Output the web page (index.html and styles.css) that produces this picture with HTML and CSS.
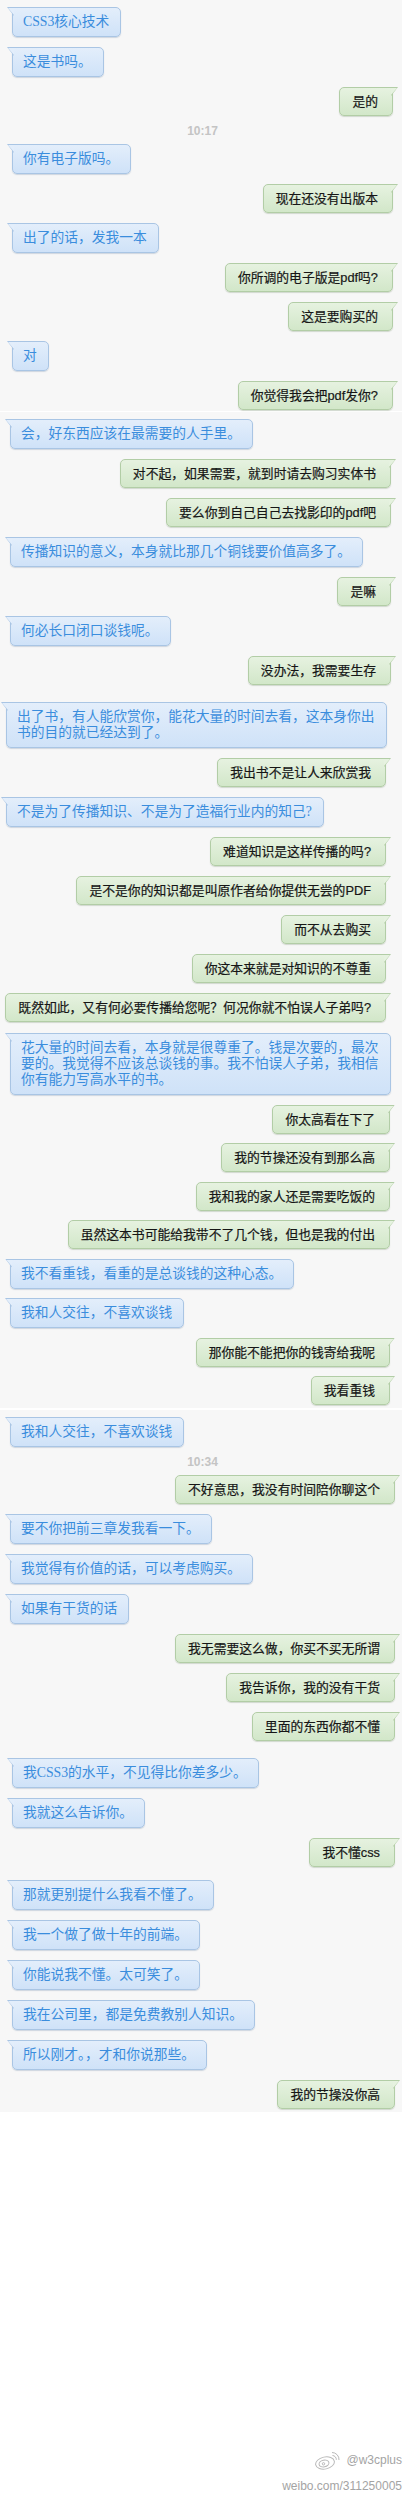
FILE: index.html
```html
<!DOCTYPE html>
<html lang="zh-CN">
<head>
<meta charset="utf-8">
<title>聊天记录</title>
<link rel="stylesheet" href="styles.css">
</head>
<body>
<div class="panel">
  <section class="seg seg-1">
    <div class="row left"><div class="bubble blue">CSS3核心技术</div></div>
    <div class="row left"><div class="bubble blue">这是书吗。</div></div>
    <div class="row right"><div class="bubble green">是的</div></div>
    <div class="stamp">10:17</div>
    <div class="row left"><div class="bubble blue">你有电子版吗。</div></div>
    <div class="row right"><div class="bubble green">现在还没有出版本</div></div>
    <div class="row left"><div class="bubble blue">出了的话，发我一本</div></div>
    <div class="row right"><div class="bubble green">你所调的电子版是pdf吗?</div></div>
    <div class="row right"><div class="bubble green">这是要购买的</div></div>
    <div class="row left"><div class="bubble blue">对</div></div>
    <div class="row right"><div class="bubble green">你觉得我会把pdf发你?</div></div>
  </section>
  <section class="seg seg-2">
    <div class="row left"><div class="bubble blue">会，好东西应该在最需要的人手里。</div></div>
    <div class="row right"><div class="bubble green">对不起，如果需要，就到时请去购习实体书</div></div>
    <div class="row right"><div class="bubble green">要么你到自己自己去找影印的pdf吧</div></div>
    <div class="row left"><div class="bubble blue">传播知识的意义，本身就比那几个铜钱要价值高多了。</div></div>
    <div class="row right"><div class="bubble green">是嘛</div></div>
    <div class="row left"><div class="bubble blue">何必长口闭口谈钱呢。</div></div>
    <div class="row right"><div class="bubble green">没办法，我需要生存</div></div>
  </section>
  <section class="seg seg-3">
    <div class="row left"><div class="bubble blue">出了书，有人能欣赏你，能花大量的时间去看，这本身你出<br>书的目的就已经达到了。</div></div>
    <div class="row right"><div class="bubble green">我出书不是让人来欣赏我</div></div>
    <div class="row left"><div class="bubble blue">不是为了传播知识、不是为了造福行业内的知己?</div></div>
    <div class="row right"><div class="bubble green">难道知识是这样传播的吗?</div></div>
    <div class="row right"><div class="bubble green">是不是你的知识都是叫原作者给你提供无尝的PDF</div></div>
    <div class="row right"><div class="bubble green">而不从去购买</div></div>
    <div class="row right"><div class="bubble green">你这本来就是对知识的不尊重</div></div>
    <div class="row right"><div class="bubble green">既然如此，又有何必要传播给您呢？何况你就不怕误人子弟吗?</div></div>
  </section>
  <section class="seg seg-4">
    <div class="row left"><div class="bubble blue">花大量的时间去看，本身就是很尊重了。钱是次要的，最次<br>要的。我觉得不应该总谈钱的事。我不怕误人子弟，我相信<br>你有能力写高水平的书。</div></div>
    <div class="row right"><div class="bubble green">你太高看在下了</div></div>
    <div class="row right"><div class="bubble green">我的节操还没有到那么高</div></div>
    <div class="row right"><div class="bubble green">我和我的家人还是需要吃饭的</div></div>
    <div class="row right"><div class="bubble green">虽然这本书可能给我带不了几个钱，但也是我的付出</div></div>
    <div class="row left"><div class="bubble blue">我不看重钱，看重的是总谈钱的这种心态。</div></div>
    <div class="row left"><div class="bubble blue">我和人交往，不喜欢谈钱</div></div>
    <div class="row right"><div class="bubble green">那你能不能把你的钱寄给我呢</div></div>
    <div class="row right"><div class="bubble green">我看重钱</div></div>
  </section>
  <section class="seg seg-5">
    <div class="row left"><div class="bubble blue">我和人交往，不喜欢谈钱</div></div>
    <div class="stamp">10:34</div>
    <div class="row right"><div class="bubble green">不好意思，我没有时间陪你聊这个</div></div>
    <div class="row left"><div class="bubble blue">要不你把前三章发我看一下。</div></div>
    <div class="row left"><div class="bubble blue">我觉得有价值的话，可以考虑购买。</div></div>
    <div class="row left"><div class="bubble blue">如果有干货的话</div></div>
    <div class="row right"><div class="bubble green">我无需要这么做，你买不买无所谓</div></div>
    <div class="row right"><div class="bubble green">我告诉你，我的没有干货</div></div>
    <div class="row right"><div class="bubble green">里面的东西你都不懂</div></div>
  </section>
  <section class="seg seg-6">
    <div class="row left"><div class="bubble blue">我CSS3的水平，不见得比你差多少。</div></div>
    <div class="row left"><div class="bubble blue">我就这么告诉你。</div></div>
    <div class="row right"><div class="bubble green">我不懂css</div></div>
    <div class="row left row-after"><div class="bubble blue">那就更别提什么我看不懂了。</div></div>
    <div class="row left"><div class="bubble blue">我一个做了做十年的前端。</div></div>
    <div class="row left"><div class="bubble blue">你能说我不懂。太可笑了。</div></div>
    <div class="row left"><div class="bubble blue">我在公司里，都是免费教别人知识。</div></div>
    <div class="row left"><div class="bubble blue">所以刚才。，才和你说那些。</div></div>
    <div class="row right"><div class="bubble green">我的节操没你高</div></div>
  </section>
</div>
<footer class="mark">
  <div class="mark-line">
    <svg class="weibo" width="28" height="20" viewBox="0 0 28 20" aria-hidden="true">
      <g fill="none" stroke="#b9b9b9" stroke-width="1">
        <ellipse cx="11" cy="13" rx="9.5" ry="6" transform="rotate(-12 11 13)"/>
        <ellipse cx="10" cy="13.5" rx="5" ry="3.3" transform="rotate(-12 10 13.5)"/>
        <circle cx="9.5" cy="13.8" r="1.2"/>
        <path d="M18 2.5 a7 7 0 0 1 7 7.5"/>
        <path d="M18.5 5.5 a4 4 0 0 1 3.8 4.3"/>
      </g>
    </svg>
    <span class="handle">@w3cplus</span>
  </div>
  <div class="url">weibo.com/311250005</div>
</footer>
</body>
</html>
```

FILE: styles.css
```css
* {
  box-sizing: border-box;
}

html, body {
  margin: 0;
  padding: 0;
  background: #ffffff;
}

body {
  width: 408px;
  height: 2500px;
}

.panel {
  width: 402px;
}

.seg {
  display: flex;
  flex-direction: column;
  gap: 10px;
  background: #f7f7f7;
}

.seg-1 {
  height: 411px;
  padding: 7px 9px 0 12px;
  margin-bottom: 1px;
}

.seg-2 {
  height: 280px;
  padding: 7px 11px 0 10px;
}

.seg-3 {
  height: 335px;
  padding: 10px 16px 0 6px;
}

.seg-4 {
  height: 381px;
  gap: 9.5px;
  padding: 6px 12px 0 10px;
  margin-bottom: 2px;
}

.seg-5 {
  height: 338px;
  padding: 7px 7px 0 10px;
}

.seg-6 {
  height: 364px;
  padding: 10px 7px 0 12px;
}

.row {
  display: flex;
}

.row.left {
  justify-content: flex-start;
}

.row.right {
  justify-content: flex-end;
}

.row-after {
  margin-top: 3px;
}

.bubble {
  position: relative;
  white-space: nowrap;
  border: 1px solid;
  border-radius: 5px;
}

.blue {
  font-family: "Liberation Serif", "Noto Sans CJK SC", serif;
  font-size: 13.75px;
  line-height: 16px;
  color: #3a8ddd;
  padding: 6px 11px 6px 10px;
  border-color: #a9c5e4;
  border-top-left-radius: 0;
  background: linear-gradient(#e3eefb, #cfe2f8);
  box-shadow: 0 1px 1px rgba(80, 110, 150, 0.25);
}

.blue::before {
  content: "";
  position: absolute;
  left: -6px;
  top: -1px;
  width: 7px;
  height: 9px;
  background: #a9c5e4;
  clip-path: polygon(0 0, 100% 0, 100% 100%);
}

.blue::after {
  content: "";
  position: absolute;
  left: -5px;
  top: 0;
  width: 6px;
  height: 7px;
  background: #e3eefb;
  clip-path: polygon(0 0, 100% 0, 100% 100%);
}

.green {
  font-family: "Liberation Sans", "Noto Sans CJK SC", sans-serif;
  font-size: 12.8px;
  line-height: 15px;
  color: #161616;
  -webkit-text-stroke: 0.2px #161616;
  padding: 6px 14px 6px 12px;
  border-color: #b2cda6;
  border-top-right-radius: 0;
  background: linear-gradient(#e6f2e0, #d2e7c9);
  box-shadow: 0 1px 1px rgba(90, 120, 80, 0.25);
}

.green::before {
  content: "";
  position: absolute;
  right: -6px;
  top: -1px;
  width: 7px;
  height: 9px;
  background: #b2cda6;
  clip-path: polygon(0 0, 100% 0, 0 100%);
}

.green::after {
  content: "";
  position: absolute;
  right: -5px;
  top: 0;
  width: 6px;
  height: 7px;
  background: #e6f2e0;
  clip-path: polygon(0 0, 100% 0, 0 100%);
}

.stamp {
  margin: -2px 0 -4px;
  height: 14px;
  line-height: 14px;
  text-align: center;
  font-family: "Liberation Sans", sans-serif;
  font-size: 12px;
  font-weight: bold;
  color: #c4c4c4;
}

.mark {
  display: flex;
  flex-direction: column;
  align-items: flex-end;
  padding: 338px 6px 0 0;
  font-family: "Liberation Sans", sans-serif;
  font-size: 12px;
  color: #a4a4a4;
}

.mark-line {
  display: flex;
  align-items: center;
  gap: 4px;
  height: 20px;
}

.weibo {
  display: block;
}

.url {
  margin-top: 8px;
  line-height: 16px;
}
```
